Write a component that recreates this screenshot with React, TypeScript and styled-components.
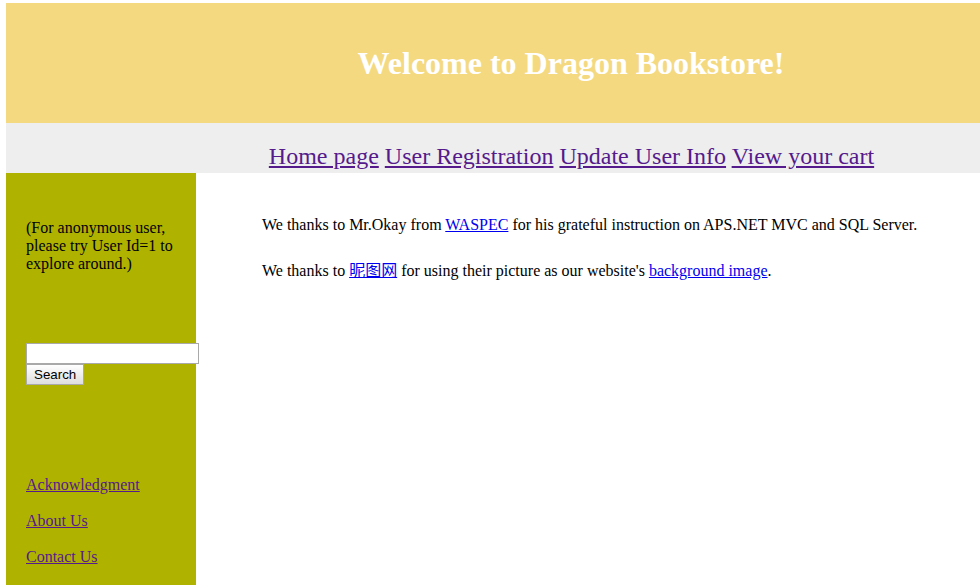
import React from "react";
import styled, { createGlobalStyle } from "styled-components";

const Global = createGlobalStyle`
  html, body { margin: 0; padding: 0; background: #fff; }
  body { font-family: "Liberation Serif", "Times New Roman", serif; font-size: 16px; overflow: hidden; }
`;

const Page = styled.div`
  padding: 3px 0 0 6px;
  min-height: 582px;
  display: flex;
  flex-direction: column;
`;

const Header = styled.header`
  height: 120px;
  background: #f4d981;
  display: flex;
  align-items: center;
  justify-content: center;
  padding-left: 156px;
`;

const Title = styled.h1`
  margin: 0;
  color: #fff;
  font-size: 32px;
  font-weight: bold;
`;

const Nav = styled.nav`
  height: 50px;
  box-sizing: border-box;
  background: #eeeeee;
  padding: 20px 0 0 157px;
  text-align: center;
  font-size: 24px;
  line-height: 27px;
`;

const NavLink = styled.a`
  color: #551a8b;
  text-decoration: underline;
`;

const Body = styled.div`
  flex: 1;
  display: flex;
`;

const Sidebar = styled.aside`
  width: 190px;
  box-sizing: border-box;
  background: #afb300;
  padding: 46px 0 0 20px;
  display: flex;
  flex-direction: column;
  min-height: 412px;
`;

const Note = styled.p`
  margin: 0;
  line-height: 18px;
  color: #000;
  width: 150px;
`;

const SearchForm = styled.form`
  margin-top: 70px;
  display: flex;
  flex-direction: column;
  align-items: flex-start;
`;

const SearchInput = styled.input`
  width: 173px;
  height: 21px;
  box-sizing: border-box;
  border: 1px solid #a9a9a9;
  padding: 1px 2px;
  margin: 0;
  font-family: "Liberation Sans", Arial, sans-serif;
  font-size: 13.33px;
  background: #fff;
`;

const SearchButton = styled.button`
  height: 21px;
  box-sizing: border-box;
  border: 1px solid #a9a9a9;
  background: linear-gradient(#ffffff, #dedede);
  padding: 0 7px;
  margin: 0;
  font-family: "Liberation Sans", Arial, sans-serif;
  font-size: 13.33px;
  color: #000;
`;

const SideLinks = styled.div`
  margin-top: 91px;
  display: flex;
  flex-direction: column;
  gap: 18px;
  line-height: 18px;
`;

const SideLink = styled.a`
  color: #551a8b;
  text-decoration: underline;
`;

const Main = styled.main`
  flex: 1;
  padding: 43px 0 0 66px;
`;

const Para = styled.p<{ $gap?: number }>`
  margin: ${(p) => p.$gap ?? 0}px 0 0;
  line-height: 18px;
  height: 18px;
  color: #000;
`;

const Link = styled.a`
  color: #0000ee;
  text-decoration: underline;
`;

const Cjk = styled(Link)`
  font-family: "Noto Sans CJK SC", sans-serif;
  font-size: 16px;
  line-height: 14px;
`;

export default function App() {
  return (
    <>
      <Global />
      <Page>
        <Header>
          <Title>Welcome to Dragon Bookstore!</Title>
        </Header>
        <Nav>
          <NavLink href="#">Home page</NavLink>{" "}
          <NavLink href="#">User Registration</NavLink>{" "}
          <NavLink href="#">Update User Info</NavLink>{" "}
          <NavLink href="#">View your cart</NavLink>
        </Nav>
        <Body>
          <Sidebar>
            <Note>(For anonymous user, please try User Id=1 to explore around.)</Note>
            <SearchForm onSubmit={(e) => e.preventDefault()}>
              <SearchInput type="text" />
              <SearchButton type="submit">Search</SearchButton>
            </SearchForm>
            <SideLinks>
              <SideLink href="#">Acknowledgment</SideLink>
              <SideLink href="#">About Us</SideLink>
              <SideLink href="#">Contact Us</SideLink>
            </SideLinks>
          </Sidebar>
          <Main>
            <Para>
              We thanks to Mr.Okay from <Link href="#">WASPEC</Link> for his grateful
              instruction on APS.NET MVC and SQL Server.
            </Para>
            <Para $gap={28}>
              We thanks to <Cjk href="#">昵图网</Cjk> for using their picture as our
              website's <Link href="#">background image</Link>.
            </Para>
          </Main>
        </Body>
      </Page>
    </>
  );
}
